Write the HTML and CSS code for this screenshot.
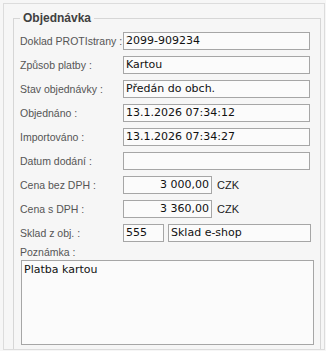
FILE: index.html
```html
<!DOCTYPE html>
<html lang="cs">
<head>
    <meta charset="UTF-8">
    <meta name="viewport" content="width=device-width, initial-scale=1.0">
    <title>Objednávka</title>
    <link rel="stylesheet" href="styles.css">
</head>
<body>

<div class="panel">
    <fieldset class="group">
        <legend>Objednávka</legend>

        <div class="row">
            <span class="lbl">Doklad PROTIstrany :</span>
            <div class="field wide">2099-909234</div>
        </div>
        <div class="row">
            <span class="lbl">Způsob platby :</span>
            <div class="field wide">Kartou</div>
        </div>
        <div class="row">
            <span class="lbl">Stav objednávky :</span>
            <div class="field wide">Předán do obch.</div>
        </div>
        <div class="row">
            <span class="lbl">Objednáno :</span>
            <div class="field wide">13.1.2026 07:34:12</div>
        </div>
        <div class="row">
            <span class="lbl">Importováno :</span>
            <div class="field wide">13.1.2026 07:34:27</div>
        </div>
        <div class="row">
            <span class="lbl">Datum dodání :</span>
            <div class="field wide"></div>
        </div>
        <!-- prices -->
        <div class="row">
            <span class="lbl">Cena bez DPH :</span>
            <div class="field money">3 000,00</div>
            <span class="unit">CZK</span>
        </div>
        <div class="row">
            <span class="lbl">Cena s DPH :</span>
            <div class="field money">3 360,00</div>
            <span class="unit">CZK</span>
        </div>
        <div class="row">
            <span class="lbl">Sklad z obj. :</span>
            <div class="field code">555</div>
            <div class="field store">Sklad e-shop</div>
        </div>

        <div class="note-label">Poznámka :</div>
        <div class="note">Platba kartou</div>
    </fieldset>
</div>

</body>
</html>
```

FILE: styles.css
```css
body {
    margin: 0;
    padding: 0;
    background-color: #f6f6f6;
    font-family: "DejaVu Sans", sans-serif;
}

.panel {
    margin: 3px 0 0 3px;
    width: 322px;
    height: 347px;
    box-sizing: border-box;
    border: 1px solid #dcdcdc;
    overflow: hidden;
}

.group {
    margin: 7px 3px 0 9px;
    padding: 4px 6px 12px 6px;
    border: 1px solid #d6d6d6;
    min-width: 0;
}

.group legend {
    padding: 0 3px;
    font-family: "Liberation Sans", sans-serif;
    font-weight: bold;
    font-size: 12px;
    line-height: 14px;
    color: #404040;
}

.row {
    display: flex;
    align-items: center;
    height: 24px;
}

.lbl,
.note-label {
    font-family: "Liberation Sans", sans-serif;
    font-size: 10.5px;
    color: #555;
}

.lbl {
    width: 103px;
    flex-shrink: 0;
    white-space: nowrap;
}

.field {
    box-sizing: border-box;
    height: 18px;
    border: 1px solid #a6a6a6;
    background-color: #fbfbfb;
    padding: 0 2px;
    font-size: 11px;
    line-height: 16px;
    color: #111;
    white-space: nowrap;
    overflow: hidden;
}

.wide {
    width: 187px;
}

.money {
    width: 89px;
    text-align: right;
}

.unit {
    margin-left: 5px;
    font-family: "Liberation Sans", sans-serif;
    font-size: 11px;
    color: #222;
}

.code {
    width: 41px;
}

.store {
    width: 143px;
    margin-left: 4px;
}

.note-label {
    height: 15px;
    line-height: 15px;
}

.note {
    box-sizing: border-box;
    height: 85px;
    margin-left: 1px;
    border: 1px solid #a6a6a6;
    background-color: #fbfbfb;
    padding: 1px 2px;
    font-size: 11px;
    line-height: 16px;
    color: #111;
}
```
